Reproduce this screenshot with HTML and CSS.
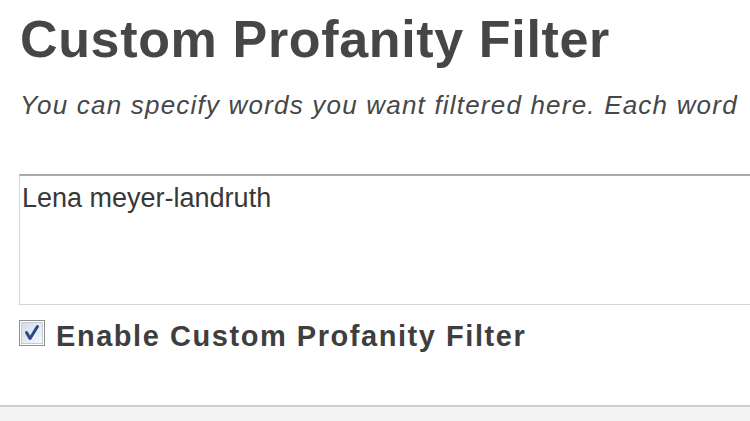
FILE: index.html
```html
<!DOCTYPE html>
<html lang="en">
<head>
    <meta charset="UTF-8">
    <meta name="viewport" content="width=device-width, initial-scale=1.0">
    <title>Custom Profanity Filter</title>
    <link rel="stylesheet" href="styles.css">
</head>
<body>
    <div class="settings">
        <h1>Custom Profanity Filter</h1>
        <p class="hint">You can specify words you want filtered here. Each word</p>

        <textarea class="word-list">Lena meyer-landruth</textarea>

        <label class="toggle">
            <svg class="check" width="26" height="26" viewBox="0 0 26 26">
                <defs>
                    <linearGradient id="boxFill" x1="0" y1="0" x2="1" y2="1">
                        <stop offset="0" stop-color="#d3dbe6"/>
                        <stop offset="1" stop-color="#f7f9fc"/>
                    </linearGradient>
                </defs>
                <rect x="0.5" y="0.5" width="25" height="25" fill="#fff" stroke="#8e8f8f"/>
                <rect x="2.5" y="2.5" width="21" height="21" fill="url(#boxFill)" stroke="#c4ccd8"/>
                <path d="M7.5 12.5 L11 18.5 L18.5 6.5" fill="none" stroke="#2b4785" stroke-width="3" stroke-linejoin="round" stroke-linecap="round"/>
            </svg>
            <span>Enable Custom Profanity Filter</span>
        </label>
    </div>

    <div class="footer"></div>
</body>
</html>
```

FILE: styles.css
```css
html, body {
    margin: 0;
    padding: 0;
    overflow: hidden;
    background-color: #fff;
}

.settings {
    padding: 13px 0 0 19px;
    font-family: "Liberation Sans", Arial, sans-serif;
}

h1 {
    margin: 0 0 0 1px;
    font-size: 52px;
    line-height: 52px;
    font-weight: bold;
    letter-spacing: 0.65px;
    color: #464646;
    white-space: nowrap;
}

.hint {
    margin: 27px 0 0 1px;
    font-size: 26px;
    line-height: 26px;
    font-style: italic;
    letter-spacing: 1.2px;
    color: #474747;
    white-space: nowrap;
}

.word-list {
    display: block;
    box-sizing: border-box;
    width: 731px;
    height: 131px;
    margin: 56px 0 0 0;
    padding: 6px 2px;
    border: 1px solid #d6d6d6;
    border-top: 2px solid #a9a9a9;
    border-right: none;
    font-family: "Liberation Sans", Arial, sans-serif;
    font-size: 27px;
    line-height: 32px;
    color: #383838;
    resize: none;
    outline: none;
}

.toggle {
    display: flex;
    align-items: flex-end;
    gap: 11px;
    margin-top: 16px;
    height: 29px;
}

.check {
    display: block;
    margin-bottom: 4px;
    flex-shrink: 0;
}

.toggle span {
    font-size: 29px;
    line-height: 29px;
    font-weight: bold;
    letter-spacing: 1.55px;
    color: #3e3e3e;
    white-space: nowrap;
    position: relative;
    top: 1px;
}

.footer {
    margin-top: 55px;
    height: 14px;
    border-top: 2px solid #cfcfcf;
    background-color: #f4f4f4;
}
```
